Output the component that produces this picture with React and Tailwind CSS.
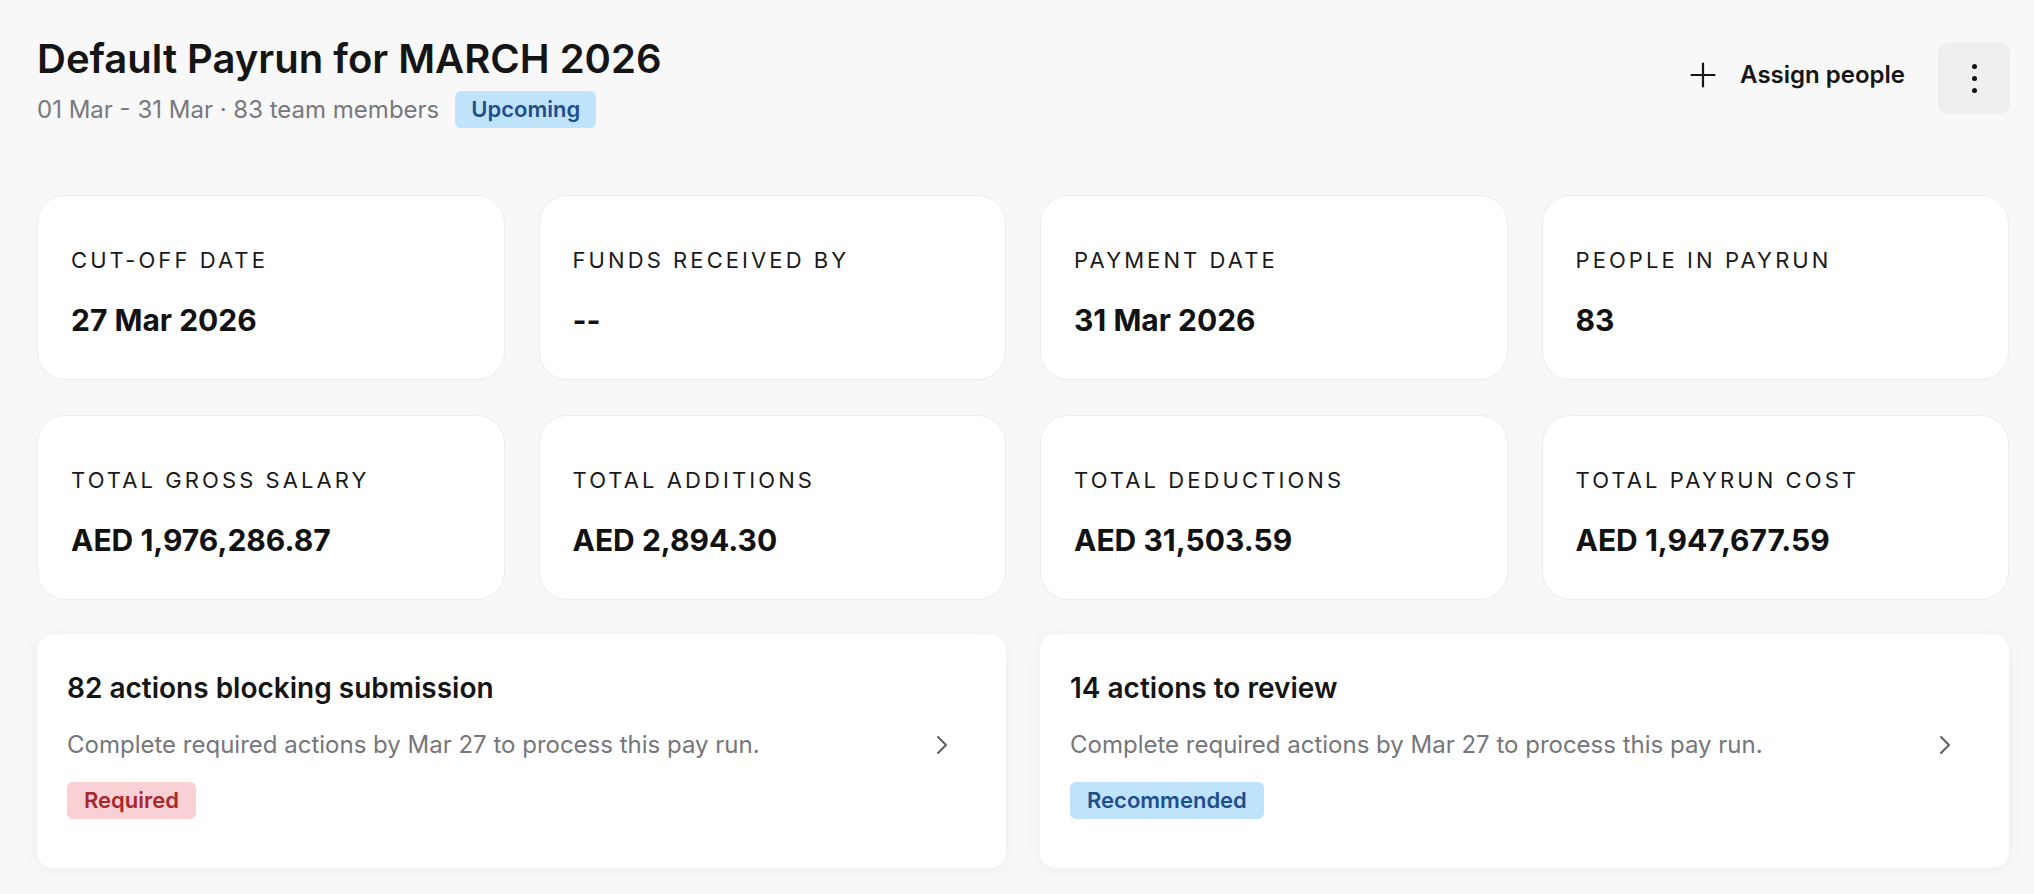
const stats = [
  { label: 'Cut-off date', value: '27 Mar 2026' },
  { label: 'Funds received by', value: '--' },
  { label: 'Payment date', value: '31 Mar 2026' },
  { label: 'People in payrun', value: '83' },
  { label: 'Total gross salary', value: 'AED 1,976,286.87' },
  { label: 'Total additions', value: 'AED 2,894.30' },
  { label: 'Total deductions', value: 'AED 31,503.59' },
  { label: 'Total payrun cost', value: 'AED 1,947,677.59' },
];

const actions = [
  {
    title: '82 actions blocking submission',
    text: 'Complete required actions by Mar 27 to process this pay run.',
    tag: 'Required',
    tagClass: 'bg-[#f9d0d4] text-[#a8282c]',
  },
  {
    title: '14 actions to review',
    text: 'Complete required actions by Mar 27 to process this pay run.',
    tag: 'Recommended',
    tagClass: 'bg-[#bfe3fb] text-[#1f4e8f]',
  },
];

function StatCard({ label, value }) {
  return (
    <div className="h-[185px] rounded-[28px] border border-[#ececec] bg-white px-[33px] pt-[50px]">
      <div className="text-[22px] leading-[28px] uppercase tracking-[0.14em] text-[#1a1a1a]">{label}</div>
      <div className="mt-[28px] text-[30px] leading-[36px] font-bold text-[#121212]">{value}</div>
    </div>
  );
}

function ActionCard({ title, text, tag, tagClass }) {
  return (
    <div className="h-[234px] rounded-[16px] bg-white pl-[30px] pr-[58px] pt-[37px] shadow-[0_2px_14px_rgba(0,0,0,0.05)] cursor-pointer">
      <div className="text-[28px] leading-[34px] font-semibold text-[#151515]">{title}</div>
      <div className="mt-[25px] flex items-center justify-between">
        <p className="text-[24px] leading-[30px] text-[#75767b]">{text}</p>
        <svg width="12" height="20" viewBox="0 0 12 20" fill="none" stroke="#5f5f5f" strokeWidth="2" strokeLinecap="round" strokeLinejoin="round">
          <polyline points="2,2 10,10 2,18" />
        </svg>
      </div>
      <span className={`mt-[22px] inline-flex h-[37px] items-center rounded-[6px] px-[17px] text-[22px] font-semibold ${tagClass}`}>
        {tag}
      </span>
    </div>
  );
}

export default function App() {
  return (
    <div className="min-h-screen bg-[#f8f8f8] font-['Inter',sans-serif] pb-[27px]">
      <header className="flex items-start justify-between pl-[37px] pr-[24px] pt-[36px]">
        <div>
          <h1 className="text-[40px] leading-[46px] font-semibold text-[#151515]">
            Default Payrun for MARCH 2026
          </h1>
          <div className="mt-[9px] flex items-center gap-[16px]">
            <span className="text-[24px] text-[#77787d]">01 Mar - 31 Mar · 83 team members</span>
            <span className="inline-flex h-[37px] items-center rounded-[6px] bg-[#bfe3fb] px-[16px] text-[22px] font-semibold text-[#1f4e8f]">
              Upcoming
            </span>
          </div>
        </div>
        <div className="mt-[4px] flex items-center gap-[33px]">
          <button className="-mt-[4px] flex items-center gap-[24px] text-[24px] font-semibold text-[#151515]">
            <svg width="26" height="26" viewBox="0 0 26 26" fill="none" stroke="#151515" strokeWidth="2.2" strokeLinecap="round">
              <line x1="13" y1="1.5" x2="13" y2="24.5" />
              <line x1="1.5" y1="13" x2="24.5" y2="13" />
            </svg>
            Assign people
          </button>
          <button className="mt-[2px] flex h-[72px] w-[72px] flex-col items-center justify-center gap-[7px] rounded-[10px] bg-[#efefef]">
            <span className="h-[5px] w-[5px] rounded-full bg-[#111]" />
            <span className="h-[5px] w-[5px] rounded-full bg-[#111]" />
            <span className="h-[5px] w-[5px] rounded-full bg-[#111]" />
          </button>
        </div>
      </header>

      <section className="mt-[67px] grid grid-cols-4 gap-x-[34px] gap-y-[35px] pl-[37px] pr-[25px]">
        {stats.map((s) => (
          <StatCard key={s.label} {...s} />
        ))}
      </section>

      <section className="mt-[34px] grid grid-cols-2 gap-[34px] pl-[37px] pr-[25px]">
        {actions.map((a) => (
          <ActionCard key={a.title} {...a} />
        ))}
      </section>
    </div>
  );
}
